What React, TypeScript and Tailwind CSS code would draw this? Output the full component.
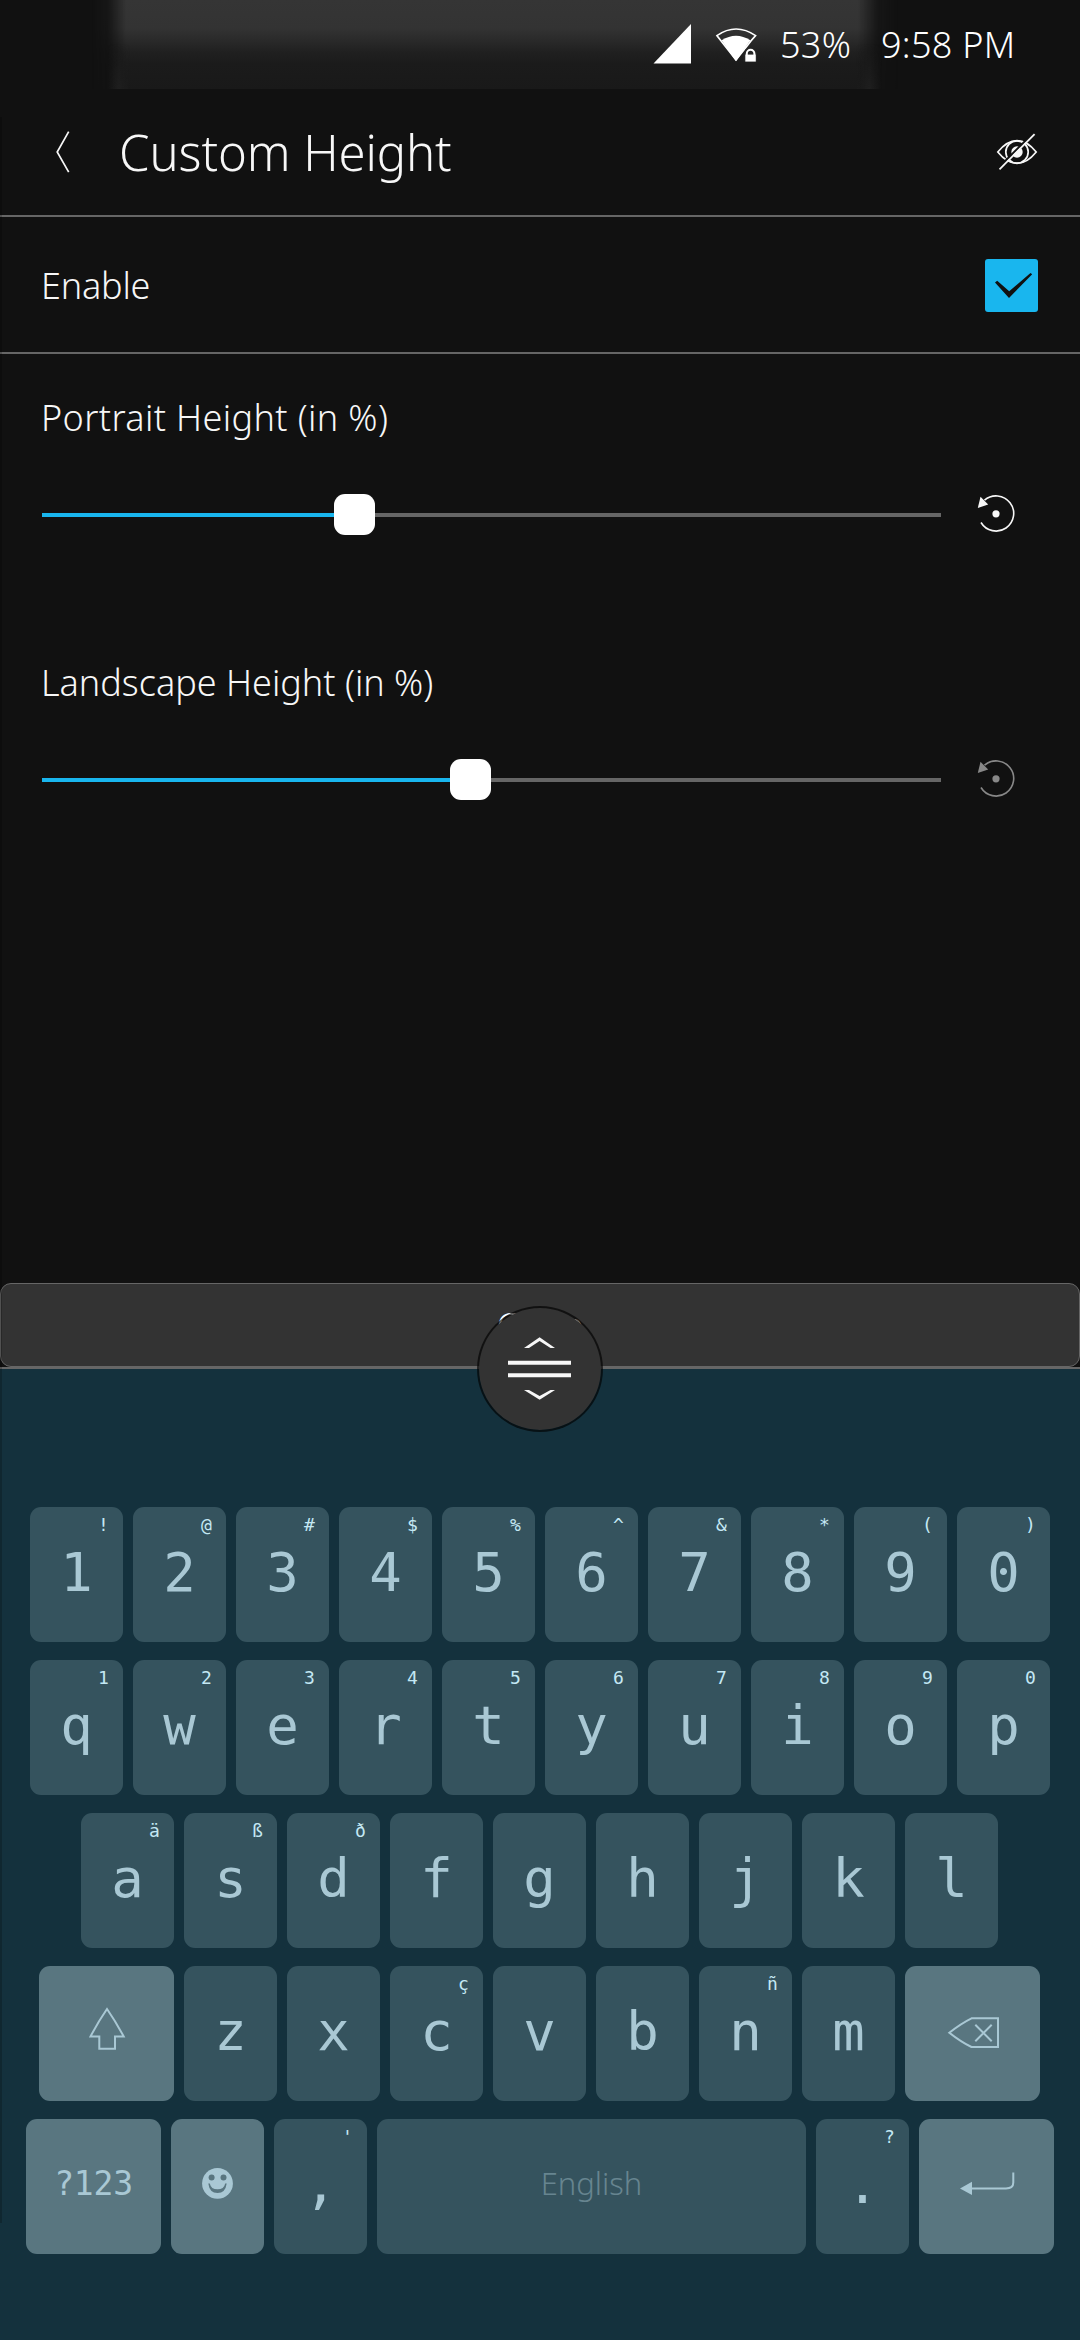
import React from "react";

type KeyDef = { label: string; hint?: string };

const row = (labels: string, hints: string[] = []): KeyDef[] =>
  labels.split("").map((label, i) => ({ label, hint: hints[i] }));

const numberRow = row("1234567890", ["!", "@", "#", "$", "%", "^", "&", "*", "(", ")"]);
const topRow = row("qwertyuiop", ["1", "2", "3", "4", "5", "6", "7", "8", "9", "0"]);
const homeRow = row("asdfghjkl", ["ä", "ß", "ð"]);
const lowerRow = row("zxcvbnm", ["", "", "ç", "", "", "ñ"]);

function Key({ label, hint }: KeyDef) {
  return (
    <div className="relative h-[135px] w-[93px] rounded-[11px] bg-[#35535e] text-center">
      <div className="h-[131px] text-[54px] leading-[131px] text-[#a9c8d4]">{label}</div>
      {hint ? (
        <span className="absolute top-0 right-[14px] w-[11px] text-center text-[18px] leading-[36px] text-[#c4e8f4]">
          {hint}
        </span>
      ) : null}
    </div>
  );
}

function ActionKey({ wide, children }: { wide?: boolean; children: React.ReactNode }) {
  return (
    <div
      className={
        wide
          ? "h-[135px] w-[135px] rounded-[11px] bg-[#597680] text-[#a9c8d4]"
          : "h-[135px] w-[93px] rounded-[11px] bg-[#597680] text-[#a9c8d4]"
      }
    >
      {children}
    </div>
  );
}

function Slider({ left, dim }: { left: number; dim?: boolean }) {
  return (
    <div className="mt-[43px] flex h-[60px] items-center pl-[42px]">
      <div className="relative h-1 w-[899px] bg-[#666666]">
        <div className="h-1 bg-[#19b6ee]" style={{ width: left + 20 }} />
        <div
          className="absolute top-[-19px] h-[41px] w-[41px] rounded-[11px] bg-white"
          style={{ left }}
        />
      </div>
      <svg
        className={dim ? "ml-[29px] text-[#888888]" : "ml-[29px] text-[#f7f7f7]"}
        width="50"
        height="60"
        viewBox="970 485 50 60"
        fill="none"
      >
        <path d="M981 522.5A17.6 17.6 0 1 0 984.5 500.2" stroke="currentColor" strokeWidth="1.6" />
        <path d="M980.5 496.8L988.2 504.6L977.8 507.9Z" fill="currentColor" />
        <circle cx="996" cy="513.8" r="3.6" fill="currentColor" />
      </svg>
    </div>
  );
}

export default function App() {
  return (
    <div className="relative flex h-[2340px] w-[1080px] flex-col overflow-hidden bg-[#111111] font-['Noto_Sans',sans-serif] font-light text-white">
      {/* Status bar */}
      <div className="relative h-[89px]">
        <div className="absolute inset-y-0 left-[92px] w-[806px] bg-[linear-gradient(to_bottom,#353535_0px,#333333_28px,#2a2a2a_40px,#202020_52px,#1b1b1b_64px,#191919_89px)] [mask-image:linear-gradient(to_right,transparent_0px,rgba(0,0,0,0.15)_16px,black_34px,black_766px,rgba(0,0,0,0.15)_786px,transparent_806px)]" />
        <div className="absolute bottom-0 left-[108px] h-[45px] w-[22px] bg-[linear-gradient(to_right,transparent,#1f1f1f,transparent)] [mask-image:linear-gradient(to_bottom,transparent,black)]" />
        <div className="absolute bottom-0 left-[856px] h-[45px] w-[26px] bg-[linear-gradient(to_right,transparent,#1f1f1f,transparent)] [mask-image:linear-gradient(to_bottom,transparent,black)]" />
        <div className="relative flex h-[89px] items-center pl-[650px] text-[36px] tracking-[0.3px] whitespace-nowrap">
          <svg width="110" height="89" viewBox="650 0 110 89" fill="none" className="shrink-0">
            <path d="M653.5 63.5L691 24V63.5Z" fill="white" />
            <path
              d="M749.6 42.4L755.6 35.6Q736 22.4 716.9 35.6L736 60L751 41"
              stroke="white"
              strokeWidth="1.6"
              strokeLinejoin="miter"
            />
            <path d="M721.6 40.3Q736 31.2 750.4 40.3L736 61.3Z" fill="white" />
            <path
              d="M743.5 61.5V54.5Q745 47.5 750.5 47.5Q754 47.5 757 53V61.5Z"
              fill="#262626"
            />
            <path
              d="M746.8 55V53.6A3.8 3.8 0 0 1 754.4 53.6V55"
              stroke="white"
              strokeWidth="2"
            />
            <path d="M745.3 54.6H755.8V61.6H745.3Z" fill="white" />
          </svg>
          <span className="ml-5 w-[101px]">53%</span>
          <span>9:58 PM</span>
        </div>
      </div>

      {/* Page header */}
      <div className="flex h-[128px] items-center border-b-2 border-[#666666] pl-[50px]">
        <svg width="30" height="60" viewBox="50 122 30 60" fill="none">
          <path d="M68.7 131.7L57.2 152L68.7 172.2" stroke="#f7f7f7" strokeWidth="1.7" />
        </svg>
        <h1 className="ml-[39px] text-[49px] leading-[64px] tracking-[-0.1px] text-[#f7f7f7]">
          Custom Height
        </h1>
        <svg
          className="mr-[38px] ml-auto"
          width="50"
          height="50"
          viewBox="992 127 50 50"
          fill="none"
        >
          <g stroke="#f7f7f7" strokeWidth="1.7">
            <path d="M997.8 152C1003 145.5 1009 140.6 1017 140.6C1025 140.6 1031 145.5 1036.2 152C1031 158.5 1025 163.4 1017 163.4C1009 163.4 1003 158.5 997.8 152Z" />
            <circle cx="1017" cy="152" r="11.2" />
          </g>
          <circle cx="1017" cy="152" r="5.7" fill="#f7f7f7" />
          <path d="M1001 165.3L1034 132.3" stroke="#111111" strokeWidth="2.2" />
          <path d="M999.5 169.3L1034.6 134.2" stroke="#f7f7f7" strokeWidth="1.8" />
        </svg>
      </div>

      {/* Enable row */}
      <div className="flex h-[137px] items-center justify-between border-b-2 border-[#666666] pt-[2px] pr-[42px] pl-[41px]">
        <span className="text-[36px] tracking-[-0.2px] text-[#f7f7f7]">Enable</span>
        <svg width="53" height="53" viewBox="985 259 53 53">
          <rect x="985" y="259" width="53" height="53" rx="3" fill="#19b6ee" />
          <path
            d="M995 282.5L997.2 280.8L1009.2 291.3L1030.5 273L1032.2 274.3L1009 298Z"
            fill="#111111"
          />
        </svg>
      </div>

      {/* Height sliders */}
      <div className="pt-10 text-[#f7f7f7]">
        <div className="h-12 pl-[41px] text-[36px] leading-[48px] tracking-[0.38px]">
          Portrait Height (in %)
        </div>
        <Slider left={291.5} />
        <div className="mt-[114px] h-12 pl-[41px] text-[36px] leading-[48px]">
          Landscape Height (in %)
        </div>
        <Slider left={407.5} dim />
      </div>

      {/* Close button with the resize handle over it */}
      <div className="relative mt-auto h-[84px] rounded-[11px] border border-[#666666] bg-[#333333] text-center">
        <span className="text-[35px] leading-[82px] text-white">Close</span>
        <div className="absolute top-[22px] left-[476px] z-10 h-[126px] w-[126px] rounded-full border-2 border-black/65 bg-[#333333] bg-clip-padding">
          <svg width="122" height="122" viewBox="479 1308 122 122" fill="none">
            <g fill="#f7f7f7">
              <path d="M524 1348L539.6 1337.3L555 1348H550.5L539.6 1341L529 1348Z" />
              <path d="M524 1390L539.6 1399.8L555 1390H550.5L539.6 1396L529 1390Z" />
              <path d="M508 1360.7H571V1364.8H508Z" />
              <path d="M508 1373.2H571V1377.2H508Z" />
            </g>
          </svg>
        </div>
      </div>

      {/* Keyboard */}
      <div className="flex h-[973px] flex-col items-center gap-[18px] border-t-2 border-[#666666] bg-[#14313d] pt-[138px] font-['DejaVu_Sans_Mono',monospace] font-normal">
        <div className="flex gap-[10px]">
          {numberRow.map((k) => (
            <Key key={k.label} {...k} />
          ))}
        </div>
        <div className="flex gap-[10px]">
          {topRow.map((k) => (
            <Key key={k.label} {...k} />
          ))}
        </div>
        <div className="mr-px flex gap-[10px]">
          {homeRow.map((k) => (
            <Key key={k.label} {...k} />
          ))}
        </div>
        <div className="mr-px flex gap-[10px]">
          <ActionKey wide>
            <svg width="135" height="135" viewBox="39 1966 135 135" fill="none">
              <path
                d="M107 2009Q98 2022 90.5 2036.5H99.3V2048.7H115V2036.5H123.7Q116 2022 107 2009Z"
                stroke="currentColor"
                strokeWidth="2"
              />
            </svg>
          </ActionKey>
          {lowerRow.map((k) => (
            <Key key={k.label} {...k} />
          ))}
          <ActionKey wide>
            <svg width="135" height="135" viewBox="905 1966 135 135" fill="none">
              <path
                d="M949.3 2032.7Q961 2023.5 971.5 2018.3H998V2047H971.5Q961 2042 949.3 2032.7Z"
                stroke="currentColor"
                strokeWidth="2"
              />
              <path
                d="M975.3 2024.8L991.7 2041.2M991.7 2024.8L975.3 2041.2"
                stroke="currentColor"
                strokeWidth="2"
              />
            </svg>
          </ActionKey>
        </div>
        <div className="flex gap-[10px]">
          <ActionKey wide>
            <div className="text-center text-[33px] leading-[130px] tracking-[-0.2px]">?123</div>
          </ActionKey>
          <ActionKey>
            <svg width="93" height="135" viewBox="171 2119 93 135" fill="none">
              <circle cx="217.5" cy="2183.4" r="15.4" fill="currentColor" />
              <circle cx="211.6" cy="2177.6" r="3" fill="#597680" />
              <circle cx="223.5" cy="2177.6" r="3" fill="#597680" />
              <path
                d="M208.3 2183.4Q209.6 2193 217.5 2193Q225.4 2193 226.7 2183.4H225.2Q224 2189.3 217.5 2189.3Q211 2189.3 209.8 2183.4Z"
                fill="#597680"
              />
            </svg>
          </ActionKey>
          <Key label="," hint="'" />
          <div className="h-[135px] w-[429px] rounded-[11px] bg-[#35535e] text-center font-['Noto_Sans',sans-serif] text-[31px] leading-[128px] font-light text-[#678590]">
            English
          </div>
          <Key label="." hint="?" />
          <ActionKey wide>
            <svg width="135" height="135" viewBox="919 2119 135 135" fill="none">
              <path
                d="M1013.3 2172.5V2182.5Q1013.3 2188.4 1006 2188.4H970"
                stroke="currentColor"
                strokeWidth="2"
              />
              <path d="M960 2188.4L972 2181.8V2195Z" fill="currentColor" />
            </svg>
          </ActionKey>
        </div>
      </div>

      {/* Shadow along the left screen edge */}
      <div className="absolute top-[117px] left-0 h-[2106px] w-[2px] bg-black/20" />
    </div>
  );
}
